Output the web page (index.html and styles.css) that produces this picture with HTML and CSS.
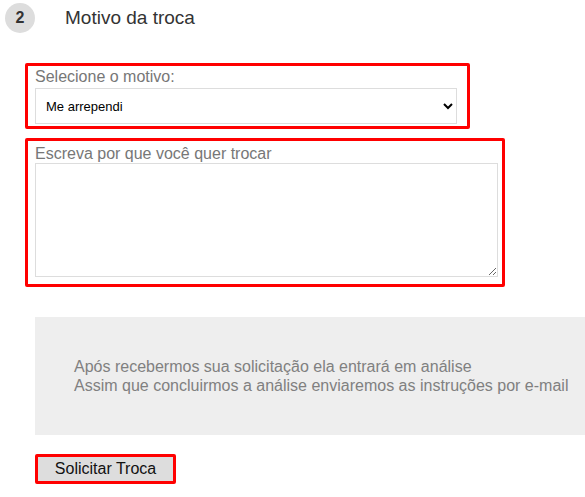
FILE: index.html
```html
<!DOCTYPE html>
<html lang="pt-BR">
<head>
	<meta charset="UTF-8">
	<title>Motivo da troca</title>
	<link rel="stylesheet" href="styles.css">
</head>
<body>
	<div class="step">
		<span class="step-num">2</span>
		<h2 class="step-title">Motivo da troca</h2>
	</div>
	<form class="troca" action="javascript:;">
		<div class="field field-select">
			<label for="motivo">Selecione o motivo:</label>
			<select id="motivo">
				<option>Me arrependi</option>
				<option>Tamanho errado</option>
				<option>Produto com defeito</option>
			</select>
		</div>
		<div class="field field-text">
			<label for="porque">Escreva por que você quer trocar</label>
			<textarea id="porque"></textarea>
		</div>
		<div class="aviso">
			<p>Após recebermos sua solicitação ela entrará em análise</p>
			<p>Assim que concluirmos a análise enviaremos as instruções por e-mail</p>
		</div>
		<button type="submit" class="btn">Solicitar Troca</button>
	</form>
</body>
</html>
```

FILE: styles.css
```css
*{
	margin: 0;
	padding: 0;
	box-sizing: border-box;
}
body {
	font-family: "Liberation Sans", Arial, sans-serif;
	color: #333;
	overflow-x: hidden;
}
.step {
	display: flex;
	align-items: center;
	padding: 3px 0 0 5px;
	height: 33px;
}
.step-num {
	width: 30px;
	height: 30px;
	border-radius: 50%;
	background: #ddd;
	font-weight: bold;
	font-size: 16px;
	display: flex;
	align-items: center;
	justify-content: center;
	color: #333;
}
.step-title {
	font-weight: normal;
	font-size: 19px;
	margin-left: 30px;
	color: #333;
}
.troca {
	padding: 30px 0 0 25px;
}
.field {
	border: 3px solid #f00;
	border-radius: 2px;
	display: flex;
	flex-direction: column;
}
.field label {
	font-size: 16px;
	line-height: 18px;
	color: #777;
}
.field-select {
	width: 445px;
	height: 66px;
	padding: 2px 10px 0 7px;
}
.field-select select {
	margin-top: 2px;
	width: 422px;
	height: 36px;
	border: 1px solid #ddd;
	background: #fff;
	font-family: "Liberation Sans", Arial, sans-serif;
	font-size: 13px;
	color: #000;
	padding: 0 6px;
}
.field-text {
	margin-top: 9px;
	width: 480px;
	height: 149px;
	padding: 4px 4px 0 7px;
}
.field-text textarea {
	width: 463px;
	height: 114px;
	border: 1px solid #ddd;
	font-family: "Liberation Sans", Arial, sans-serif;
	font-size: 14px;
	padding: 4px;
}
.aviso {
	margin: 30px 0 0 10px;
	height: 118px;
	background: #eee;
	padding: 40px 0 0 39px;
	color: #808080;
	font-size: 16px;
	line-height: 19px;
}
.btn {
	margin: 19px 0 0 10px;
	width: 141px;
	height: 30px;
	border: 3px solid #f00;
	border-radius: 2px;
	background: #ddd;
	font-family: "Liberation Sans", Arial, sans-serif;
	font-size: 16px;
	color: #111;
	cursor: pointer;
}
```
